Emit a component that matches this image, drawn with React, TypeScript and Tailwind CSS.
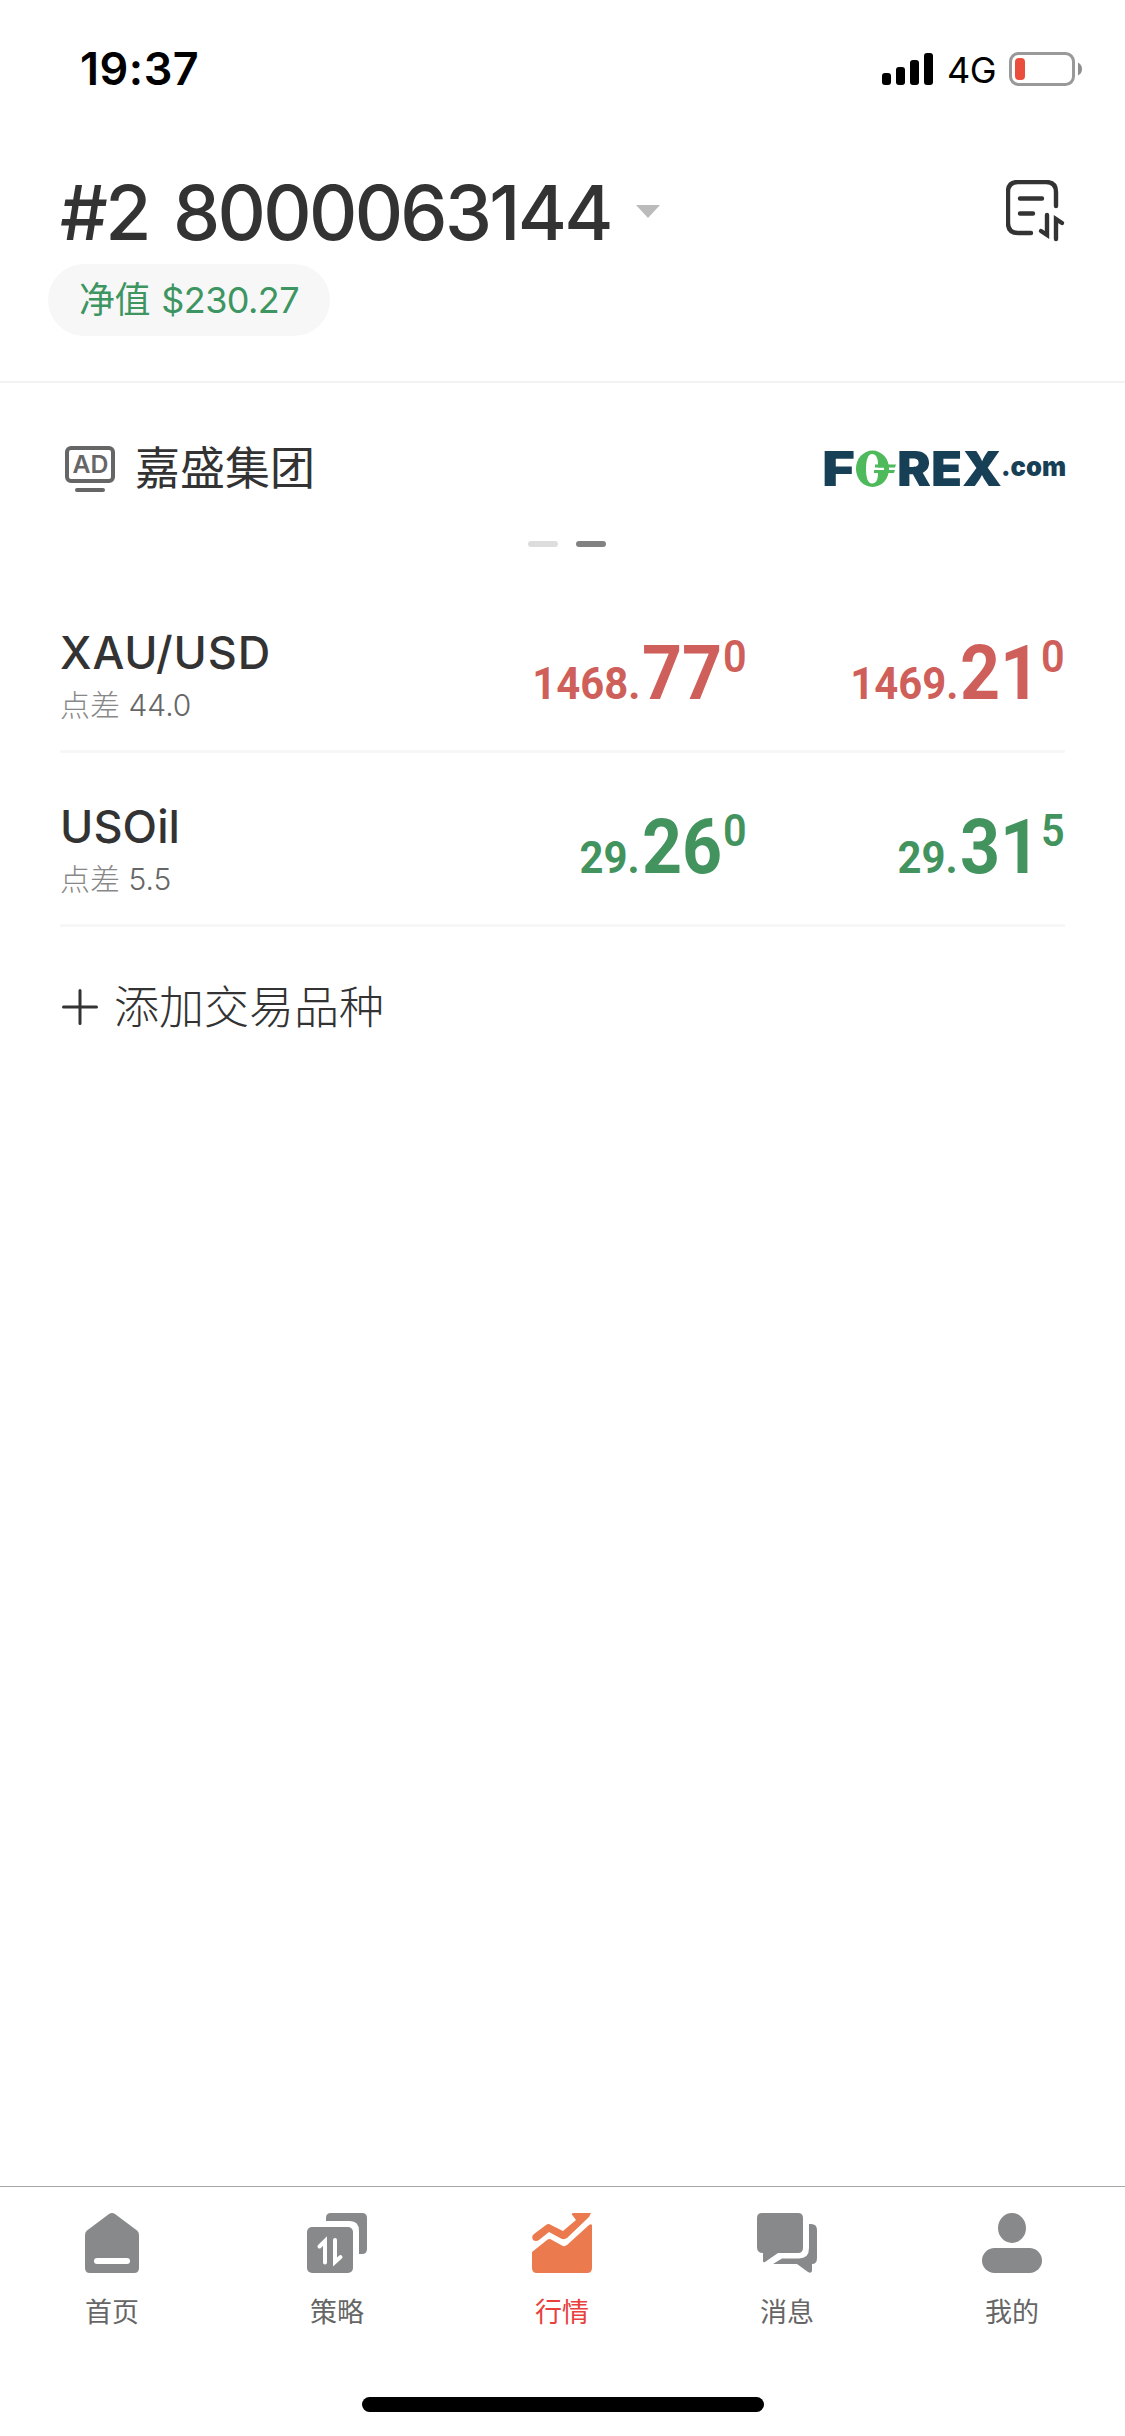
import type { ReactNode } from "react";

type Quote = {
  symbol: string;
  spread: string;
  color: string;
  tracking: string;
  bid: [string, string, string];
  ask: [string, string, string];
};

const quotes: Quote[] = [
  {
    symbol: "XAU/USD",
    spread: "44.0",
    color: "text-[#cf5f5a]",
    tracking: "tracking-[0.9px]",
    bid: ["1468.", "77", "0"],
    ask: ["1469.", "21", "0"],
  },
  {
    symbol: "USOil",
    spread: "5.5",
    color: "text-[#43935f]",
    tracking: "tracking-[0.1px]",
    bid: ["29.", "26", "0"],
    ask: ["29.", "31", "5"],
  },
];

function StatusBar() {
  return (
    <div className="flex h-[138px] items-center justify-between pl-[80px] pr-[43px]">
      <span className="text-[45px] leading-[54px] font-semibold tracking-[0.5px] text-black">19:37</span>
      <div className="flex items-center">
        <svg width="51" height="32" viewBox="0 0 51 32" className="mr-[14px]">
          <rect x="0" y="20" width="9" height="12" rx="3" />
          <rect x="14" y="14" width="9" height="18" rx="3" />
          <rect x="28" y="7" width="9" height="25" rx="3" />
          <rect x="42" y="0" width="9" height="32" rx="3" />
        </svg>
        <span className="mr-[13px] pt-[2px] text-[36px] leading-[40px] tracking-[-0.5px] text-black">4G</span>
        <svg width="73" height="34" viewBox="0 0 73 34">
          <rect x="1.5" y="1.5" width="63" height="31" rx="8" fill="none" stroke="#999" strokeWidth="3" />
          <rect x="6" y="6" width="10" height="22" rx="4" fill="#eb4d3d" />
          <path d="M69 10.5Q73 12.500 73 17T69 23.500Z" fill="#8e8e8e" />
        </svg>
      </div>
    </div>
  );
}

function Header() {
  return (
    <header className="flex h-[245px] items-start justify-between border-b-2 border-[#f2f2f2] pl-[48px] pr-[59px]">
      <div className="flex flex-col items-start">
        <div className="flex items-center pt-[30px] pl-[12px]">
          <h1 className="text-[75px] leading-[90px] font-medium tracking-[-2.7px] [word-spacing:7px] whitespace-nowrap text-[#333]">
            #2 8000063144
          </h1>
          <svg width="24" height="13" viewBox="0 0 24 13" className="-mt-[4px] ml-[25px]">
            <path d="M0 0H24L12 13Z" fill="#bbb" />
          </svg>
        </div>
        <div className="mt-[6px] flex h-[72px] w-[282px] items-center justify-center rounded-full bg-[#f7f7f7] text-[36px] tracking-[-0.6px] [word-spacing:2px] whitespace-nowrap text-[#3d9562]">
          净值 $230.27
        </div>
      </div>
      <svg
        width="60"
        height="62"
        viewBox="0 0 60 62"
        fill="none"
        stroke="#333"
        strokeWidth="4.4"
        strokeLinecap="round"
        strokeLinejoin="round"
        className="mt-[42px]"
      >
        <path d="M50 26V12Q50 2 40 2H12Q2 2 2 12V43Q2 53 12 53H25M14 18.500H36M14 33.500H27" />
        <path d="M41 35V55L35 51M50 59V39L56 43" strokeLinejoin="miter" />
      </svg>
    </header>
  );
}

function ForexLogo() {
  return (
    <svg
      width="252"
      height="62"
      viewBox="-6 -12 252 62"
      fill="#173f56"
      className="-mr-[5px] font-['Inter',sans-serif] font-black"
    >
      <text x="-3" y="36" fontSize="48" textLength="33" lengthAdjust="spacingAndGlyphs">F</text>
      <path d="M47.500 .5A16.500 18.200 0 1 0 47.500 37A16.500 18.200 0 1 0 47.500 .5ZM47 4C51 4 53 8 53 14.500V23C53 30 51 33.500 47 33.500S41 28 41 19 43 4 47 4Z" fill="#4fba5b" fillRule="evenodd" />
      <path d="M50 17.500H59V20H50Z" fill="#fff" />
      <path d="M50 14.500H71L70 17.500H50ZM49 20H70L69 23H49Z" fill="#4fba5b" />
      <text x="72" y="36" fontSize="48" textLength="105" lengthAdjust="spacingAndGlyphs">REX</text>
      <text x="176" y="26" fontSize="27" textLength="65" lengthAdjust="spacingAndGlyphs">.com</text>
    </svg>
  );
}

function AdBanner() {
  return (
    <section className="h-[206px] pt-[62px] pr-[59px] pl-[65px]">
      <div className="flex h-[48px] items-center justify-between">
        <div className="flex items-center">
          <svg width="50" height="46" viewBox="0 0 50 46" className="mr-[20px]">
            <rect x="2" y="2" width="46" height="33" rx="4" fill="none" stroke="#666" strokeWidth="4" />
            <text x="7.500" y="27" fontSize="24" fontWeight="600" fill="#666" textLength="36" lengthAdjust="spacingAndGlyphs">AD</text>
            <path d="M12 44H38" stroke="#666" strokeWidth="4" strokeLinecap="round" />
          </svg>
          <span className="text-[45px] leading-[48px] text-[#333]">嘉盛集团</span>
        </div>
        <ForexLogo />
      </div>
      <div className="mt-[48px] flex justify-center gap-[18px]">
        <span className="ml-[3px] h-[6px] w-[30px] rounded-full bg-[#ddd]" />
        <span className="h-[6px] w-[30px] rounded-full bg-[#828282]" />
      </div>
    </section>
  );
}

function Price({ parts }: { parts: [string, string, string] }) {
  const [whole, decimals, pip] = parts;
  return (
    <div className="flex w-[318px] items-baseline justify-end font-['Roboto',sans-serif] leading-[80px] font-bold">
      <span className="mr-[4px] origin-right scale-x-[0.93] text-[45px]">{whole}</span>
      <span className="-ml-[2px] w-[81px] origin-left scale-x-[0.92] text-[76px]">{decimals}</span>
      <span className="relative -top-[27px] w-[24px] origin-left scale-x-[0.92] text-[45px] font-semibold">{pip}</span>
    </div>
  );
}

function QuoteRow({ quote }: { quote: Quote }) {
  return (
    <div className="mx-[60px] flex h-[174px] border-b-3 border-[#f7f7f7]">
      <div className="flex-1 pt-[47px]">
        <div className={`text-[45px] leading-[54px] font-medium text-[#333] ${quote.tracking}`}>{quote.symbol}</div>
        <div className="mt-[4px] text-[30px] leading-[42px] font-light text-[#888]">
          点差 <span className="text-[#666]">{quote.spread}</span>
        </div>
      </div>
      <div className={`flex pt-[54px] ${quote.color}`}>
        <Price parts={quote.bid} />
        <Price parts={quote.ask} />
      </div>
    </div>
  );
}

function Tab({ label, active, children }: { label: string; active?: boolean; children: ReactNode }) {
  return (
    <div className={`flex w-[225px] flex-col items-center ${active ? "text-[#ec7a4f]" : "text-[#88898a]"}`}>
      <svg width="60" height="60" viewBox="0 0 60 60" fill="currentColor" className="mr-px">
        {children}
      </svg>
      <span className={`mt-[20px] mr-px text-[27px] leading-[40px] ${active ? "text-[#e8403c]" : "text-[#666]"}`}>
        {label}
      </span>
    </div>
  );
}

function TabBar() {
  return (
    <nav className="flex h-[250px] flex-col items-center border-t border-[#a6a6a6] pt-[26px]">
      <div className="flex">
        <Tab label="首页">
          <path d="M27 1Q30-1 33 1L55 17.500Q57 19 57 22V55Q57 60 52 60H8Q3 60 3 55V22Q3 19 5 17.500Z" />
          <rect x="12" y="45" width="36" height="6" rx="3" fill="#fff" />
        </Tab>
        <Tab label="策略">
          <rect x="0" y="14" width="46" height="46" rx="5" />
          <path d="M19 8V5Q19 0 24 0H55Q60 0 60 5V36Q60 41 55 41H52V18Q52 8 43 8Z" />
          <path d="M12.500 33.500L18 28V49.500M28 27V49L33.500 44" fill="none" stroke="#fff" strokeWidth="4" strokeLinecap="round" />
        </Tab>
        <Tab label="行情" active>
          <path d="M2 21L14 12Q16.500 10 19 12L31 18L44 7L41 3Q38 0 42 0H59L57 4L35 25Q32 27 29 25.500L17 19L7 27Q4 29 1 27Q-1 23 2 21Z" />
          <path d="M0 39L15 27Q17.500 25 20 27L30 32.500Q32 34 35 32L57 12Q59 10.500 60 12V55Q60 60 55 60H5Q0 60 0 55Z" />
        </Tab>
        <Tab label="消息">
          <path d="M5 0H41Q46 0 46 5V35Q46 40 41 40H21L8 49Q6 50 6 48V40Q0 40 0 34V5Q0 0 5 0Z" />
          <path d="M52 11H54Q60 11 60 17V45Q60 51 55 51V58Q54 61 51 59L40 51H16L25 45.500H42Q52 45.500 52 35Z" />
        </Tab>
        <Tab label="我的">
          <ellipse cx="30" cy="15" rx="14" ry="15" />
          <rect x="0" y="35" width="60" height="25" rx="12.500" />
        </Tab>
      </div>
      <div className="mt-[64px] h-[15px] w-[402px] rounded-full bg-black" />
    </nav>
  );
}

export default function App() {
  return (
    <div className="flex h-[2436px] w-[1125px] flex-col bg-white font-['Inter','Noto_Sans_CJK_SC',sans-serif]">
      <StatusBar />
      <Header />
      <main className="flex-1">
        <AdBanner />
        <div className="-mt-[10px]">
          {quotes.map((quote) => (
            <QuoteRow key={quote.symbol} quote={quote} />
          ))}
        </div>
        <button className="flex items-center pt-[51px] pl-[62px] text-[45px] leading-[60px] font-light text-[#333]">
          <svg width="36" height="36" viewBox="0 0 36 36" stroke="#333" strokeWidth="3" strokeLinecap="round" className="-mt-[2px] mr-[16px]">
            <path d="M1.500 18H34.500M18 1.500V34.500" />
          </svg>
          添加交易品种
        </button>
      </main>
      <TabBar />
    </div>
  );
}
